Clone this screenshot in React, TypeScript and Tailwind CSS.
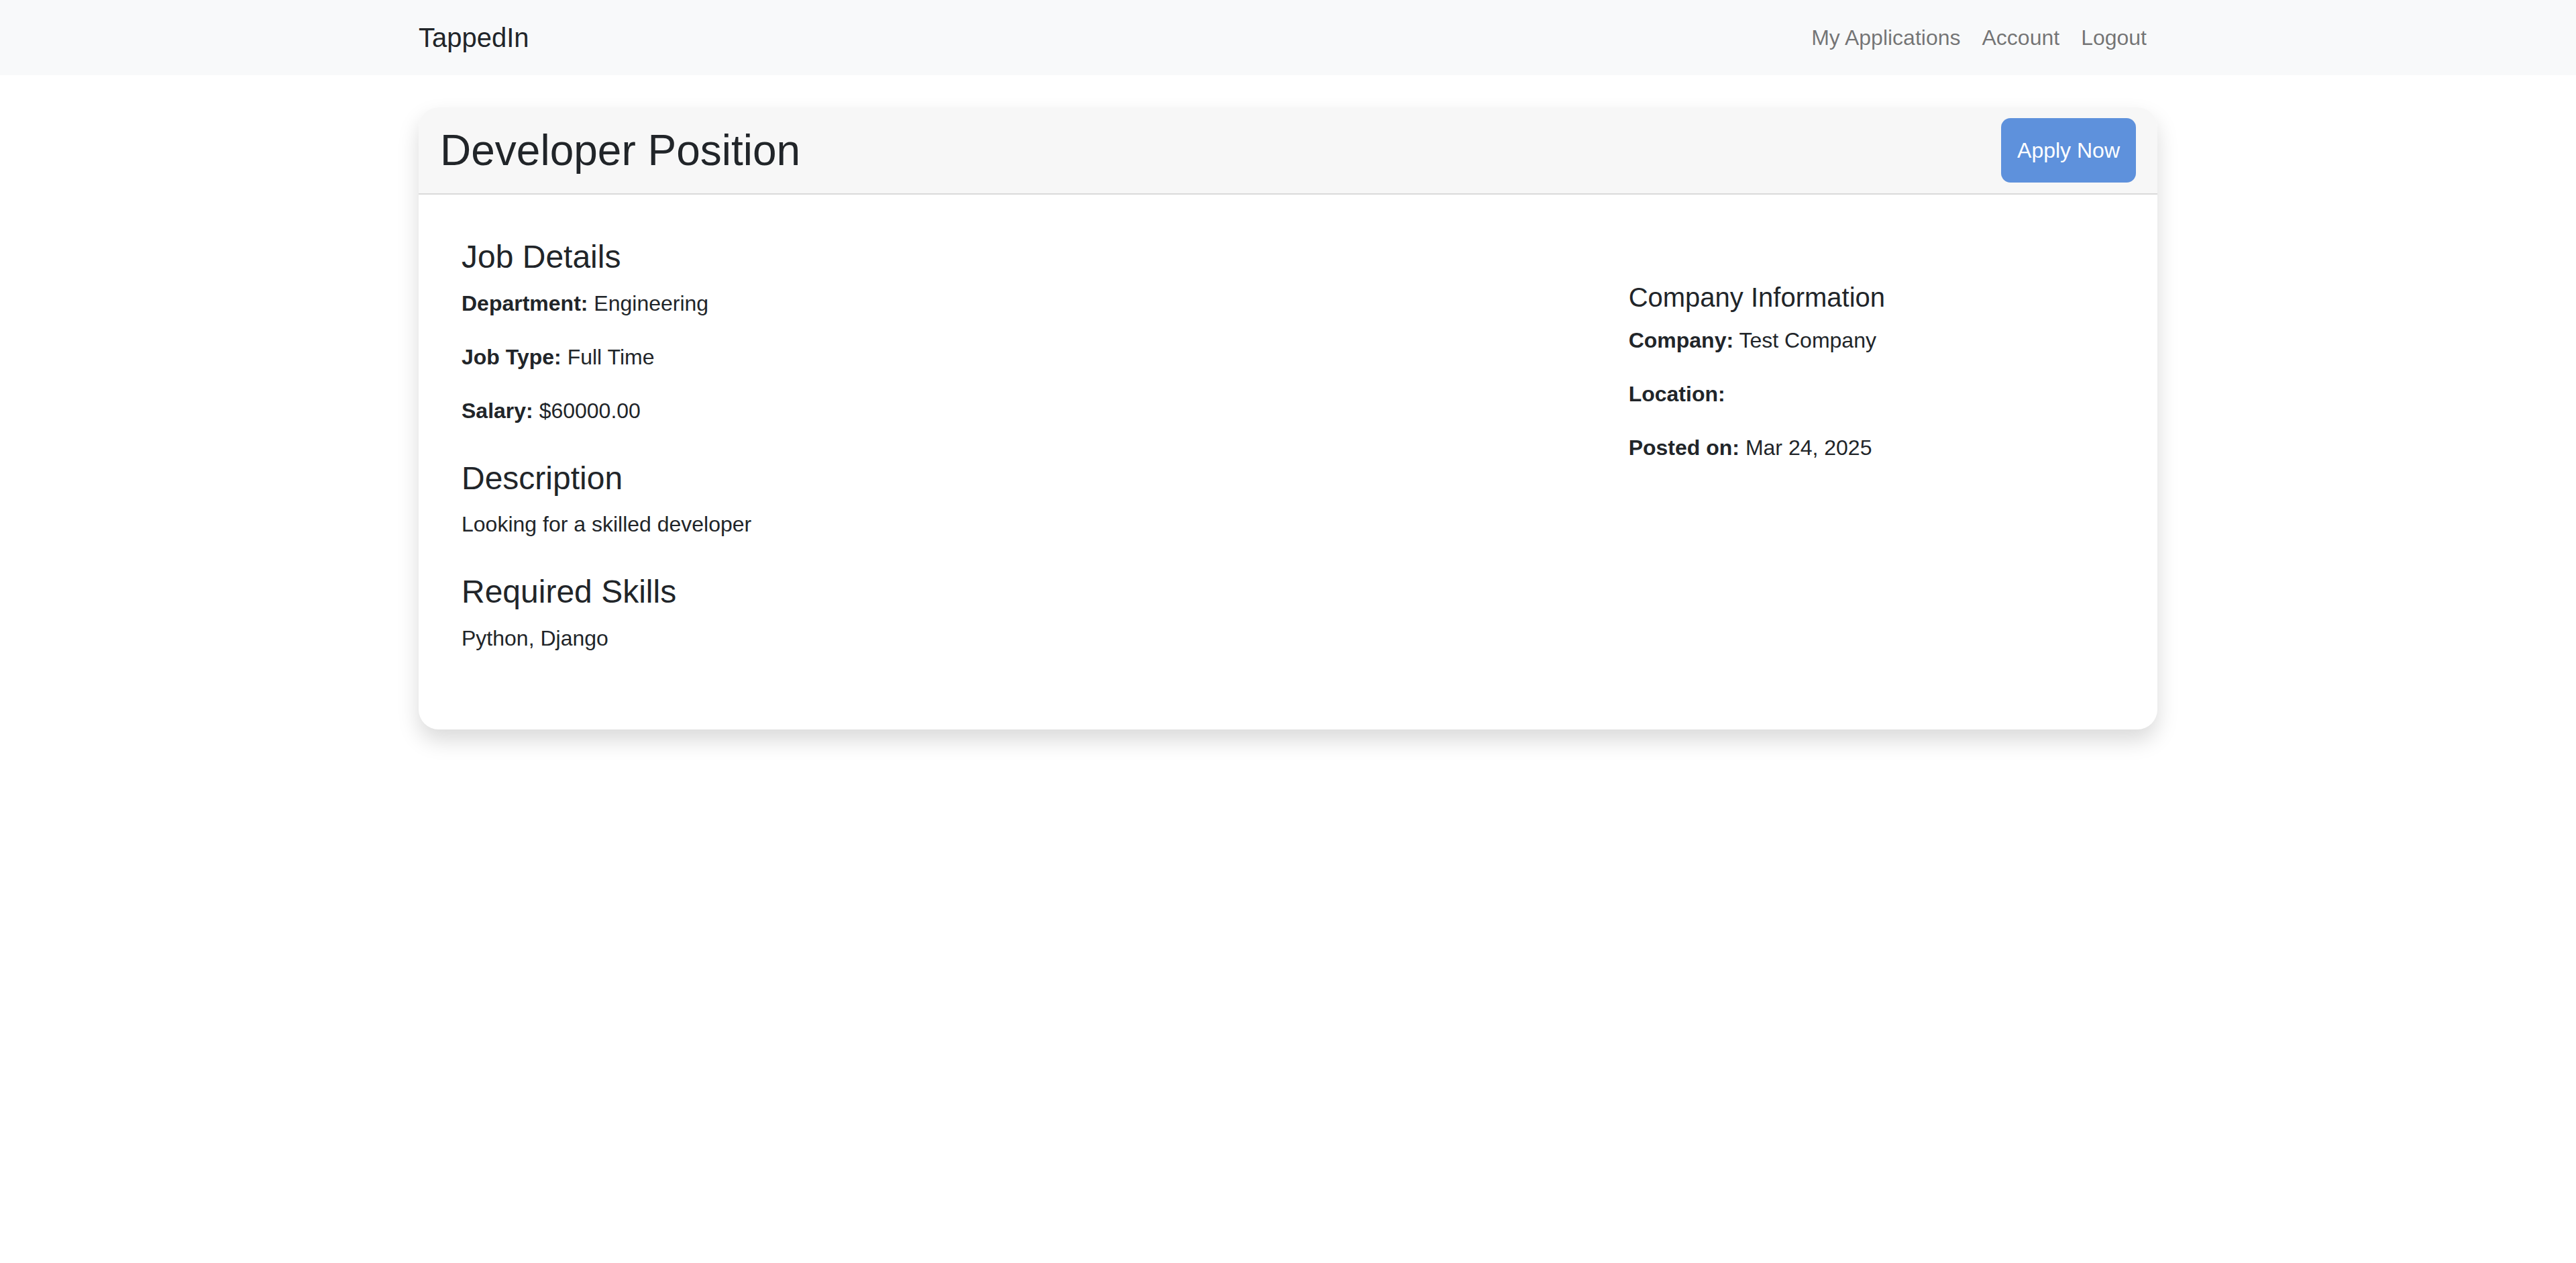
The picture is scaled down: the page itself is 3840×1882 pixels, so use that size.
import React from "react";

const font = { fontFamily: '"Liberation Sans", Arial, Helvetica, sans-serif' };

function Field({ label, value, last }: { label: string; value?: string; last?: boolean }) {
  return (
    <p className={`text-[32px] leading-[48px] ${last ? "mb-0" : "mb-[32px]"}`}>
      <strong className="font-bold">{label}</strong>
      {value ? ` ${value}` : ""}
    </p>
  );
}

export default function App() {
  return (
    <div className="min-h-screen bg-white text-[#212529] font-['Liberation_Sans',Arial,Helvetica,sans-serif]" style={font}>
      <nav className="bg-[#f8f9fa] py-[16px]">
        <div className="mx-auto w-[2640px] px-[24px] flex items-center justify-between">
          <a className="text-[40px] leading-[60px] py-[10px] text-[#212529] no-underline mr-[32px]">TappedIn</a>
          <div className="flex items-center">
            <a className="px-[16px] py-[16px] text-[32px] leading-[48px] text-[rgba(0,0,0,0.55)]">My Applications</a>
            <a className="px-[16px] py-[16px] text-[32px] leading-[48px] text-[rgba(0,0,0,0.55)]">Account</a>
            <a className="px-[16px] py-[16px] text-[32px] leading-[48px] text-[rgba(0,0,0,0.55)]">Logout</a>
          </div>
        </div>
      </nav>

      <main className="mx-auto w-[2640px] px-[24px] mt-[48px]">
        <div className="bg-white rounded-[30px] overflow-hidden shadow-[0_16px_32px_rgba(0,0,0,0.15)]">
          <div className="bg-[#f7f7f7] border-b-[2px] border-[#dadada] px-[32px] py-[16px] flex items-center justify-between">
            <h2 className="text-[64px] leading-[76.8px] font-normal m-0">Developer Position</h2>
            <button className="bg-[#5e91dc] text-white text-[32px] leading-[48px] px-[24px] py-[24px] rounded-[14px]">
              Apply Now
            </button>
          </div>

          <div className="px-[64px] pt-[64px] pb-[112px]">
            <div className="flex -mx-[24px]">
              <div className="w-2/3 px-[24px]">
                <h4 className="text-[48px] leading-[57.6px] font-normal mb-[16px]">Job Details</h4>
                <Field label="Department:" value="Engineering" />
                <Field label="Job Type:" value="Full Time" />
                <Field label="Salary:" value="$60000.00" last />

                <h4 className="text-[48px] leading-[57.6px] font-normal mt-[48px] mb-[16px]">Description</h4>
                <p className="text-[32px] leading-[48px] mb-0">Looking for a skilled developer</p>

                <h4 className="text-[48px] leading-[57.6px] font-normal mt-[48px] mb-[16px]">Required Skills</h4>
                <p className="text-[32px] leading-[48px] mb-0">Python, Django</p>
              </div>

              <div className="w-1/3 px-[24px]">
                <div className="pl-[65px] pt-[65px]">
                  <h5 className="text-[40px] leading-[48px] font-normal mb-[16px]">Company Information</h5>
                  <Field label="Company:" value="Test Company" />
                  <Field label="Location:" />
                  <Field label="Posted on:" value="Mar 24, 2025" last />
                </div>
              </div>
            </div>
          </div>
        </div>
      </main>
    </div>
  );
}
